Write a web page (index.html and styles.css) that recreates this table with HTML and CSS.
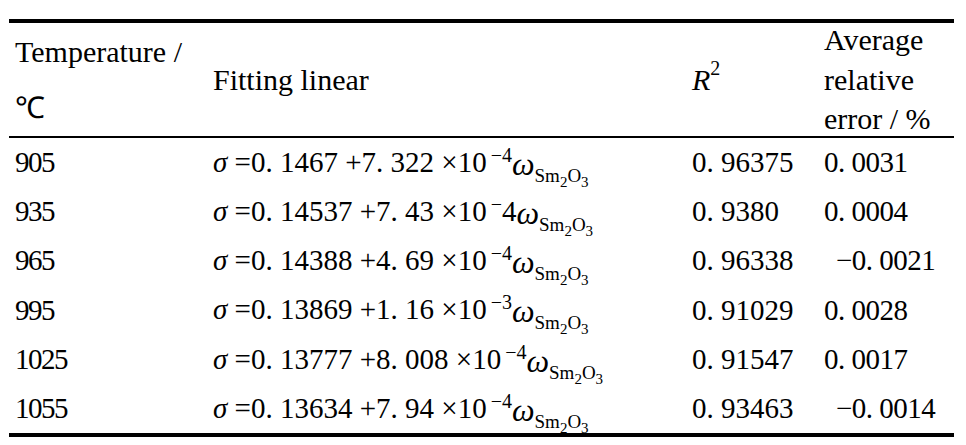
FILE: index.html
```html
<!DOCTYPE html>
<html lang="en">
<head>
<meta charset="utf-8">
<link rel="stylesheet" href="styles.css">
</head>
<body>
<div class="tbl">
  <div class="cell head"><div class="two">Temperature /<br>℃</div></div>
  <div class="cell head">Fitting linear</div>
  <div class="cell head"><span class="it">R</span><span class="rs">2</span></div>
  <div class="cell head"><div class="three">Average<br>relative<br>error / %</div></div>

  <div class="cell t">905</div>
  <div class="cell f"><span class="sg">σ</span> =0. 1467 +7. 322 ×10<span class="sp">−4</span><span class="om">ω</span><span class="sb">Sm<span class="sb2">2</span>O<span class="sb2">3</span></span></div>
  <div class="cell r">0. 96375</div>
  <div class="cell e">0. 0031</div>

  <div class="cell t">935</div>
  <div class="cell f"><span class="sg">σ</span> =0. 14537 +7. 43 ×10<span class="sp">−</span>4<span class="om">ω</span><span class="sb">Sm<span class="sb2">2</span>O<span class="sb2">3</span></span></div>
  <div class="cell r">0. 9380</div>
  <div class="cell e">0. 0004</div>

  <div class="cell t">965</div>
  <div class="cell f"><span class="sg">σ</span> =0. 14388 +4. 69 ×10<span class="sp">−4</span><span class="om">ω</span><span class="sb">Sm<span class="sb2">2</span>O<span class="sb2">3</span></span></div>
  <div class="cell r">0. 96338</div>
  <div class="cell e"><span class="neg">−0. 0021</span></div>

  <div class="cell t">995</div>
  <div class="cell f"><span class="sg">σ</span> =0. 13869 +1. 16 ×10<span class="sp">−3</span><span class="om">ω</span><span class="sb">Sm<span class="sb2">2</span>O<span class="sb2">3</span></span></div>
  <div class="cell r">0. 91029</div>
  <div class="cell e">0. 0028</div>

  <div class="cell t">1025</div>
  <div class="cell f"><span class="sg">σ</span> =0. 13777 +8. 008 ×10<span class="sp">−4</span><span class="om">ω</span><span class="sb">Sm<span class="sb2">2</span>O<span class="sb2">3</span></span></div>
  <div class="cell r">0. 91547</div>
  <div class="cell e">0. 0017</div>

  <div class="cell t">1055</div>
  <div class="cell f"><span class="sg">σ</span> =0. 13634 +7. 94 ×10<span class="sp">−4</span><span class="om">ω</span><span class="sb">Sm<span class="sb2">2</span>O<span class="sb2">3</span></span></div>
  <div class="cell r">0. 93463</div>
  <div class="cell e"><span class="neg">−0. 0014</span></div>
</div>
</body>
</html>
```

FILE: styles.css
```css
html, body {
  margin: 0;
  background: #fff;
  color: #000;
  font-family: "Liberation Serif", "Times New Roman", Tinos, serif;
}

.tbl {
  display: grid;
  grid-template-columns: 198px 479px 132px 136px;
  grid-template-rows: 115px repeat(6, 49.17px);
  width: 945px;
  margin: 19px 0 0 9px;
  border-top: 4px solid #000;
  border-bottom: 4px solid #000;
  font-family: "Liberation Serif", "Times New Roman", Tinos, serif;
}

.cell {
  display: flex;
  align-items: center;
  padding-left: 6px;
  white-space: nowrap;
  font-size: 29px;
  font-family: "Liberation Serif", "Times New Roman", Tinos, serif;
}

.head {
  box-sizing: border-box;
  border-bottom: 2px solid #000;
  font-size: 30px;
}

.two { line-height: 56px; }
.three { line-height: 39.5px; margin: -3px 0; }

.it { font-style: italic; }
.rs { font-size: 20px; margin-top: -22px; }

.t { letter-spacing: -1.5px; }
.e { letter-spacing: -0.5px; }
.neg { margin-left: 12px; }

.f { display: block; line-height: 49px; }
.sg { font-style: italic; }
.sp { font-size: 20px; vertical-align: 10px; line-height: 0; margin-left: 4px; }
.om { font-style: italic; font-size: 32px; vertical-align: -3px; line-height: 0; }
.sb { font-size: 19px; vertical-align: -10px; line-height: 0; }
.sb2 { font-size: 15px; vertical-align: -5px; line-height: 0; }
```
